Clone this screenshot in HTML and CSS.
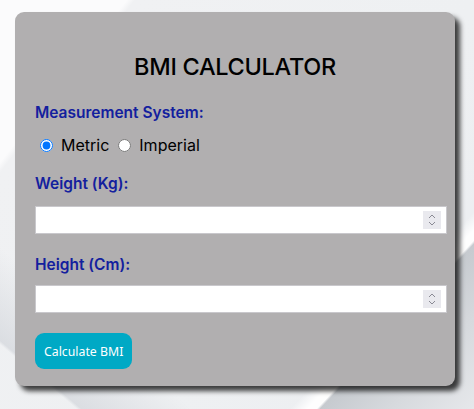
FILE: index.html
```html
<!DOCTYPE html>
<html>
<head>
<meta charset="utf-8">
<link rel="stylesheet" href="styles.css">
</head>
<body>
<div class="bg">
  <form class="card">
    <h1 class="title">BMI CALCULATOR</h1>
    <div class="label label-system">Measurement System:</div>
    <div class="radios">
      <label class="radio"><input type="radio" name="sys" checked>Metric</label>
      <label class="radio"><input type="radio" name="sys">Imperial</label>
    </div>
    <label class="label label-weight" for="w">Weight (Kg):</label>
    <div class="field">
      <input id="w" class="num" type="number">
      <span class="spin"><svg width="8" height="14" viewBox="0 0 8 14"><path d="M1 5 L4 2 L7 5 M1 9 L4 12 L7 9" fill="none" stroke="#8a8a94" stroke-width="1"/></svg></span>
    </div>
    <label class="label label-height" for="h">Height (Cm):</label>
    <div class="field">
      <input id="h" class="num" type="number">
      <span class="spin"><svg width="8" height="14" viewBox="0 0 8 14"><path d="M1 5 L4 2 L7 5 M1 9 L4 12 L7 9" fill="none" stroke="#8a8a94" stroke-width="1"/></svg></span>
    </div>
    <button type="button" class="btn">Calculate BMI</button>
  </form>
</div>
</body>
</html>
```
FILE: styles.css
```css
html, body {
  margin: 0;
  padding: 0;
}
body {
  width: 474px;
  height: 409px;
  overflow: hidden;
  font-family: "Inter", "DejaVu Sans", sans-serif;
}
.bg {
  width: 474px;
  height: 409px;
  padding: 12px 0 0 15px;
  box-sizing: border-box;
  background:
    linear-gradient(133deg, rgba(255,255,255,0) 0%, rgba(255,255,255,0) 78.5%, rgba(255,255,255,0.95) 80.5%, rgba(255,255,255,0.95) 81.6%, #c6cacf 82%, #d6d9dd 90%, #e6e8eb 100%),
    linear-gradient(40deg, rgba(255,255,255,0) 0%, rgba(255,255,255,0) 8%, rgba(214,217,222,0.8) 8.5%, rgba(236,238,241,0) 20%),
    linear-gradient(128deg, #fbfbfc 0%, #fbfbfc 16%, #f0f1f3 17%, #eef0f2 60%, #eceef1 100%);
}
.card {
  width: 440px;
  height: 374px;
  box-sizing: border-box;
  background: #b1afb0;
  border-radius: 9px;
  box-shadow: 5px 5px 5px rgba(0,0,0,0.75);
  padding: 40px 8px 0 20px;
  display: flex;
  flex-direction: column;
  align-items: flex-start;
}
.title {
  align-self: stretch;
  margin: 0 12px 0 0;
  text-align: center;
  font-size: 23.5px;
  line-height: 30px;
  font-weight: 500;
  color: #000;
  letter-spacing: -0.3px;
}
.label {
  display: block;
  font-size: 15.5px;
  line-height: 20px;
  font-weight: 600;
  color: #13209e;
}
.label-system { margin-top: 21px; }
.label-weight { margin-top: 19px; }
.label-height { margin-top: 21px; }
.radios {
  display: flex;
  margin-top: 12px;
  height: 20px;
  align-items: center;
}
.radio {
  display: flex;
  align-items: center;
  font-size: 16px;
  line-height: 20px;
  color: #000;
  margin-right: 4px;
}
.radio input {
  margin: 0 8px 0 5px;
  width: 13px;
  height: 13px;
}
.field {
  position: relative;
  align-self: stretch;
  margin-top: 12px;
}
.label-height + .field { margin-top: 10px; }
.num {
  display: block;
  width: 100%;
  height: 28px;
  box-sizing: border-box;
  border: 1px solid #c9c8cc;
  background: #fff;
  margin: 0;
  padding: 0 5px;
  outline: none;
  -moz-appearance: textfield;
}
.num::-webkit-inner-spin-button,
.num::-webkit-outer-spin-button {
  -webkit-appearance: none;
  margin: 0;
}
.spin {
  position: absolute;
  right: 6px;
  top: 5px;
  width: 18px;
  height: 18px;
  background: #e9e9ee;
  display: flex;
  align-items: center;
  justify-content: center;
}
.btn {
  margin-top: 20px;
  height: 36px;
  padding: 0 9px;
  border: none;
  border-radius: 9px;
  background: #00a9c5;
  color: #fff;
  font-family: "Noto Sans", "Open Sans", sans-serif;
  font-size: 12.3px;
}
```
